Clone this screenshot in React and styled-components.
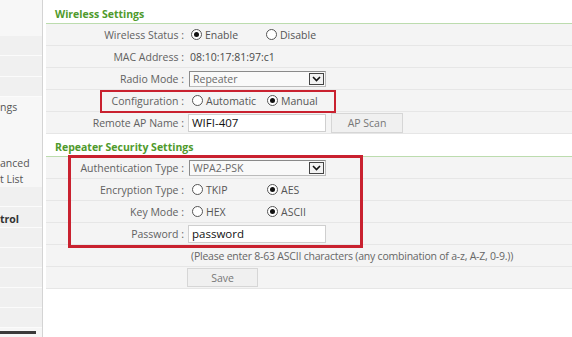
import React from "react";
import styled, { createGlobalStyle } from "styled-components";

const Global = createGlobalStyle`
  html, body { margin: 0; padding: 0; background: #fff; }
  body { width: 572px; height: 337px; overflow: hidden; font-family: "Open Sans", "Noto Sans", sans-serif; }
`;

const Page = styled.div`
  display: flex;
  width: 572px;
  height: 337px;
  position: relative;
  overflow: hidden;
  background: #fff;
`;

const Sidebar = styled.nav`
  width: 42px;
  flex: 0 0 42px;
  border-right: 1px solid #d4d4d4;
  background: #f6f6f6;
  display: flex;
  flex-direction: column;
  overflow: hidden;
`;

const NavItem = styled.div`
  height: ${(p) => p.$h}px;
  flex: 0 0 auto;
  box-sizing: border-box;
  background: ${(p) => (p.$band ? "#f0f0f0" : "#f7f7f7")};
  border-bottom: ${(p) => (p.$band ? "1px solid #fbfbfb" : "none")};
  font-size: 10.5px;
  color: ${(p) => (p.$bold ? "#333" : "#555")};
  font-weight: ${(p) => (p.$bold ? 700 : 400)};
  line-height: ${(p) => p.$h + 4}px;
  white-space: nowrap;
`;

const SubMenu = styled.div`
  height: 90px;
  flex: 0 0 auto;
  background: #f7f7f7;
  display: flex;
  flex-direction: column;
  font-size: 10.5px;
  color: #555;
  padding-top: 3px;
  box-sizing: border-box;
`;

const SubLine = styled.div`
  height: ${(p) => p.$h}px;
  line-height: ${(p) => p.$h}px;
  white-space: nowrap;
`;

const BottomBar = styled.div`
  margin-top: 3px;
  width: 36px;
  height: 3px;
  background: #3a3a3a;
`;

const Main = styled.main`
  flex: 1;
  margin-left: 3px;
  display: flex;
  flex-direction: column;
  padding-top: 1px;
`;

const SectionTitle = styled.div`
  height: 23px;
  box-sizing: border-box;
  border-bottom: 1px solid #bcdcae;
  padding-left: 9px;
  padding-top: 5px;
  font-size: 10.5px;
  font-weight: 700;
  color: #4f9a2c;
  line-height: 17px;
  background: #fff;
`;

const Row = styled.div`
  display: flex;
  align-items: center;
  height: 22px;
  box-sizing: border-box;
  background: #f4f4f4;
  border-bottom: 1px solid #e6e6e6;
`;

const Label = styled.div`
  width: 143px;
  flex: 0 0 143px;
  box-sizing: border-box;
  padding-right: 5px;
  text-align: right;
  font-size: 10.5px;
  color: #616161;
  white-space: nowrap;
`;

const Value = styled.div`
  flex: 1;
  display: flex;
  align-items: center;
  font-size: 10.5px;
  color: #555;
  white-space: nowrap;
`;

const Plain = styled.span`
  margin-left: 1px;
  color: #4a4a4a;
`;

const Option = styled.label`
  width: 75px;
  display: flex;
  align-items: center;
  gap: 3px;
  color: #555;
  margin-left: ${(p) => p.$ml || 0}px;
`;

const RadioDot = styled.span`
  width: 9px;
  height: 9px;
  border: 1px solid #555;
  border-radius: 50%;
  background: #fff;
  display: inline-flex;
  align-items: center;
  justify-content: center;
  &::after {
    content: "";
    width: 5px;
    height: 5px;
    border-radius: 50%;
    background: ${(p) => (p.$on ? "#111" : "transparent")};
  }
`;

const Select = styled.div`
  width: 137px;
  height: 16px;
  box-sizing: border-box;
  border: 1px solid #8a8a8a;
  border-right-color: #bbb;
  border-bottom-color: #bbb;
  background: #f9f9f9;
  display: flex;
  align-items: center;
  justify-content: space-between;
  padding-left: 3px;
  padding-right: 1px;
  color: #6a6a6a;
  font-size: 10.5px;
`;

const Arrow = styled.span`
  width: 15px;
  height: 12px;
  box-sizing: border-box;
  border: 1px solid #444;
  background: #f2f2f2;
  display: flex;
  align-items: center;
  justify-content: center;
`;

const TextInput = styled.div`
  width: 138px;
  height: ${(p) => p.$h || 18}px;
  box-sizing: border-box;
  border: 1px solid #cfcfcf;
  background: #fff;
  padding-left: 3px;
  display: flex;
  align-items: center;
  font-size: 11.5px;
  color: #111;
  margin-left: -1px;
`;

const Button = styled.div`
  width: ${(p) => p.$w}px;
  height: ${(p) => p.$h}px;
  box-sizing: border-box;
  border: 1px solid #d6d6d6;
  background: #f0f0f0;
  color: #777;
  font-size: 10.5px;
  display: flex;
  align-items: center;
  justify-content: center;
  margin-left: ${(p) => p.$ml || 0}px;
`;

const Hint = styled.span`
  margin-left: 2px;
  font-size: 10.5px;
  color: #666;
  letter-spacing: -0.22px;
`;

const Annotation = styled.div`
  position: absolute;
  box-sizing: border-box;
  border: ${(p) => p.$bw}px solid #c9212f;
  pointer-events: none;
`;

const Chevron = () => (
  <svg width="9" height="6" viewBox="0 0 9 6">
    <path d="M1 1 L4.5 4.5 L8 1" fill="none" stroke="#111" strokeWidth="1.6" />
  </svg>
);

const Radio = ({ on, children, ml }) => (
  <Option $ml={ml}>
    <RadioDot $on={on} />
    {children}
  </Option>
);

const Dropdown = ({ children }) => (
  <Select>
    <span>{children}</span>
    <Arrow>
      <Chevron />
    </Arrow>
  </Select>
);

export default function App() {
  return (
    <Page>
      <Global />
      <Sidebar>
        <NavItem $h={36} />
        <NavItem $h={20} $band />
        <NavItem $h={21} $band />
        <NavItem $h={20} $band />
        <SubMenu>
          <SubLine $h={15}>ngs</SubLine>
          <SubLine $h={41} />
          <SubLine $h={16}>anced</SubLine>
          <SubLine $h={16}>t List</SubLine>
        </SubMenu>
        <NavItem $h={20} $band />
        <NavItem $h={21} $band $bold>trol</NavItem>
        <NavItem $h={20} $band />
        <NavItem $h={20} $band />
        <NavItem $h={20} $band />
        <NavItem $h={20} $band />
        <NavItem $h={20} $band />
        <BottomBar />
      </Sidebar>
      <Main>
        <SectionTitle>Wireless Settings</SectionTitle>
        <Row>
          <Label>Wireless Status :</Label>
          <Value>
            <Radio on ml={2}>Enable</Radio>
            <Radio>Disable</Radio>
          </Value>
        </Row>
        <Row>
          <Label>MAC Address :</Label>
          <Value>
            <Plain>08:10:17:81:97:c1</Plain>
          </Value>
        </Row>
        <Row>
          <Label>Radio Mode :</Label>
          <Value>
            <Dropdown>Repeater</Dropdown>
          </Value>
        </Row>
        <Row>
          <Label>Configuration :</Label>
          <Value>
            <Radio ml={3}>Automatic</Radio>
            <Radio on>Manual</Radio>
          </Value>
        </Row>
        <Row>
          <Label>Remote AP Name :</Label>
          <Value>
            <TextInput>WIFI-407</TextInput>
            <Button $w={72} $h={20} $ml={5}>AP Scan</Button>
          </Value>
        </Row>
        <SectionTitle>Repeater Security Settings</SectionTitle>
        <Row>
          <Label>Authentication Type :</Label>
          <Value>
            <Dropdown>WPA2-PSK</Dropdown>
          </Value>
        </Row>
        <Row>
          <Label>Encryption Type :</Label>
          <Value>
            <Radio ml={3}>TKIP</Radio>
            <Radio on>AES</Radio>
          </Value>
        </Row>
        <Row>
          <Label>Key Mode :</Label>
          <Value>
            <Radio ml={3}>HEX</Radio>
            <Radio on>ASCII</Radio>
          </Value>
        </Row>
        <Row>
          <Label>Password :</Label>
          <Value>
            <TextInput>password</TextInput>
          </Value>
        </Row>
        <Row>
          <Label />
          <Value>
            <Hint>(Please enter 8-63 ASCII characters (any combination of a-z, A-Z, 0-9.))</Hint>
          </Value>
        </Row>
        <Row>
          <Label />
          <Value>
            <Button $w={71} $h={19} $ml={-2}>Save</Button>
          </Value>
        </Row>
      </Main>
      <Annotation $bw={2} style={{ left: 100, top: 90, width: 236, height: 23 }} />
      <Annotation $bw={3} style={{ left: 68, top: 155, width: 295, height: 93 }} />
    </Page>
  );
}
